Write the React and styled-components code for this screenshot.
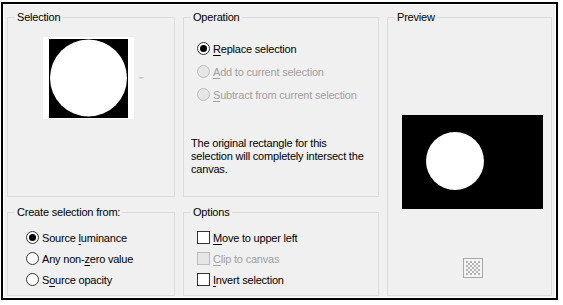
import styled, { createGlobalStyle } from "styled-components"

const GlobalStyle = createGlobalStyle`
body {
  margin: 0;
  background: #fff;
  font-family: "Segoe UI", "Liberation Sans", Arial, sans-serif;
  font-size: 11px;
  letter-spacing: -0.2px;
  color: #000;
}
`

const Frame = styled.div`
box-sizing: border-box;
margin: 2px 0 0 1px;
width: 557px;
height: 298px;
border: 2px solid #000;
background: #f0f0f0;
box-shadow: inset 0 0 0 1px #fff;
display: grid;
grid-template-columns: 168px 196px 165px;
grid-template-rows: 187px 91px;
column-gap: 8px;
row-gap: 8px;
padding: 6px 0 0 4px;
`

const Group = styled.fieldset`
box-sizing: border-box;
margin: 0;
padding: 0;
min-width: 0;
border: 1px solid #dcdcdc;
grid-column: ${p => p.$col};
grid-row: ${p => p.$row};
`

const Legend = styled.legend`
margin-left: 7px;
padding: 0 2px;
line-height: 14px;
`

const Body = styled.div`
display: flex;
flex-direction: column;
align-items: ${p => p.$center ? "center" : "flex-start"};
padding-left: ${p => p.$indent || 0}px;
`

const Thumb = styled.div`
display: flex;
align-items: center;
gap: 4px;
margin: 13px 0 0 35px;
`

const Arrow = styled.span`
width: 0;
height: 0;
border-left: 3px solid transparent;
border-right: 3px solid transparent;
border-top: 2px solid #c4c4c4;
`

const Options = styled.div`
display: flex;
flex-direction: column;
margin-top: ${p => p.$top}px;
`

const Item = styled.label`
display: flex;
align-items: center;
gap: 3px;
height: ${p => p.$h}px;
white-space: nowrap;
color: ${p => p.$disabled ? "#a0a0a0" : "#000"};
`

const Radio = styled.span`
box-sizing: border-box;
flex: none;
width: 13px;
height: 13px;
border-radius: 50%;
border: 1px solid ${p => p.$disabled ? "#bcbcbc" : "#333"};
background: ${p => p.$disabled ? "#e6e6e6" : "#fff"};
display: flex;
align-items: center;
justify-content: center;
&::after {
  content: "";
  width: 7px;
  height: 7px;
  border-radius: 50%;
  background: #000;
  display: ${p => p.$checked ? "block" : "none"};
}
`

const Check = styled.span`
box-sizing: border-box;
flex: none;
width: 13px;
height: 13px;
border: 1px solid ${p => p.$disabled ? "#bcbcbc" : "#333"};
background: ${p => p.$disabled ? "#e6e6e6" : "#fff"};
`

const Key = styled.u`
text-decoration-thickness: 1px;
text-underline-offset: 2px;
`

const Note = styled.p`
margin: 31px 0 0 7px;
line-height: 13px;
white-space: nowrap;
`

const PreviewBox = styled.div`
margin: 91px 0 0 6px;
width: 141px;
height: 94px;
background: #000;
`

const Checker = styled.div`
margin: 49px 0 0 6px;
width: 20px;
height: 20px;
box-sizing: border-box;
border: 1px solid #a8a8a8;
padding: 2px;
background: #f4f4f4;
`

const Choice = ({ type = "radio", checked, disabled, h, children }) => (
  <Item $disabled={disabled} $h={h}>
    {type === "radio"
      ? <Radio $checked={checked} $disabled={disabled} />
      : <Check $disabled={disabled} />}
    <span>{children}</span>
  </Item>
)

const App = () => {
  return (
    <>
      <GlobalStyle />
      <Frame>
        <Group $col="1" $row="1">
          <Legend>Selection</Legend>
          <Body>
            <Thumb>
              <svg width="91" height="82" viewBox="0 0 91 82">
                <rect width="91" height="82" fill="#fff" />
                <rect x="6" y="2" width="79" height="79" fill="#000" />
                <circle cx="45.5" cy="41" r="38.5" fill="#fff" />
              </svg>
              <Arrow />
            </Thumb>
          </Body>
        </Group>

        <Group $col="2" $row="1">
          <Legend>Operation</Legend>
          <Body>
            <Options $top={13} style={{ marginLeft: 13 }}>
              <Choice checked h={23}><Key>R</Key>eplace selection</Choice>
              <Choice disabled h={23}><Key>A</Key>dd to current selection</Choice>
              <Choice disabled h={23}><Key>S</Key>ubtract from current selection</Choice>
            </Options>
            <Note>
              The original rectangle for this<br />
              selection will completely intersect the<br />
              canvas.
            </Note>
          </Body>
        </Group>

        <Group $col="3" $row="1 / 3">
          <Legend>Preview</Legend>
          <Body $center>
            <PreviewBox>
              <svg width="141" height="94" viewBox="0 0 141 94">
                <circle cx="53" cy="46" r="29" fill="#fff" />
              </svg>
            </PreviewBox>
            <Checker>
              <svg width="14" height="14" viewBox="0 0 14 14" style={{ display: "block" }}>
                {[0, 1, 2, 3, 4, 5, 6].map(r =>
                  [0, 1, 2, 3, 4, 5, 6].map(c =>
                    (r + c) % 2 === 0 ? <rect key={r + "-" + c} x={c * 2} y={r * 2} width="2" height="2" fill="#b4b4b4" /> : null
                  )
                )}
              </svg>
            </Checker>
          </Body>
        </Group>

        <Group $col="1" $row="2">
          <Legend>Create selection from:</Legend>
          <Body $indent={18}>
            <Options $top={8}>
              <Choice checked h={21}>Source <Key>l</Key>uminance</Choice>
              <Choice h={21}>Any non-<Key>z</Key>ero value</Choice>
              <Choice h={21}>S<Key>o</Key>urce opacity</Choice>
            </Options>
          </Body>
        </Group>

        <Group $col="2" $row="2">
          <Legend>Options</Legend>
          <Body $indent={13}>
            <Options $top={8}>
              <Choice type="check" h={21}><Key>M</Key>ove to upper left</Choice>
              <Choice type="check" disabled h={21}><Key>C</Key>lip to canvas</Choice>
              <Choice type="check" h={21}><Key>I</Key>nvert selection</Choice>
            </Options>
          </Body>
        </Group>
      </Frame>
    </>
  )
}

export default App
